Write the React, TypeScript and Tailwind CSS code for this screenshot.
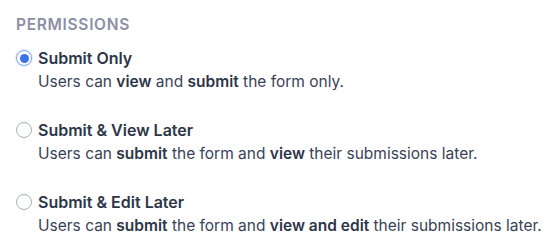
import React from "react";

type Opt = { title: string; desc: React.ReactNode; checked: boolean };

const B = ({ children }: { children: React.ReactNode }) => (
  <b className="font-semibold text-[#2d3648]">{children}</b>
);

const options: Opt[] = [
  {
    title: "Submit Only",
    checked: true,
    desc: (
      <>
        Users can <B>view</B> and <B>submit</B> the form only.
      </>
    ),
  },
  {
    title: "Submit & View Later",
    checked: false,
    desc: (
      <>
        Users can <B>submit</B> the form and <B>view</B> their submissions later.
      </>
    ),
  },
  {
    title: "Submit & Edit Later",
    checked: false,
    desc: (
      <>
        Users can <B>submit</B> the form and <B>view and edit</B> their submissions later.
      </>
    ),
  },
];

function Radio({ checked }: { checked: boolean }) {
  if (checked) {
    return (
      <span className="flex h-4 w-4 shrink-0 items-center justify-center rounded-full border border-[#7fa6ef] bg-white shadow-[0_0_0_1px_rgba(59,130,246,0.15)]">
        <span className="h-[9px] w-[9px] rounded-full bg-[#3b74e6]" />
      </span>
    );
  }
  return <span className="h-4 w-4 shrink-0 rounded-full border border-[#a9adb8] bg-white" />;
}

export default function App() {
  return (
    <div
      className="min-h-[252px] w-[555px] bg-white pl-4 pt-[15px]"
      style={{ fontFamily: "Inter, 'Noto Sans', sans-serif" }}
    >
      <div className="mb-[11px] text-[15.5px] font-semibold uppercase leading-5 tracking-[0.045em] text-[#8b8ea6]">
        Permissions
      </div>
      <div className="flex flex-col gap-6">
        {options.map((o) => (
          <div key={o.title} className="flex flex-col">
            <div className="flex items-center gap-[6px]">
              <Radio checked={o.checked} />
              <span className="text-[16px] font-semibold leading-6 text-[#2d3648]">{o.title}</span>
            </div>
            <div className="whitespace-nowrap pl-[22px] text-[15.5px] leading-6 text-[#3a4256]">{o.desc}</div>
          </div>
        ))}
      </div>
    </div>
  );
}
